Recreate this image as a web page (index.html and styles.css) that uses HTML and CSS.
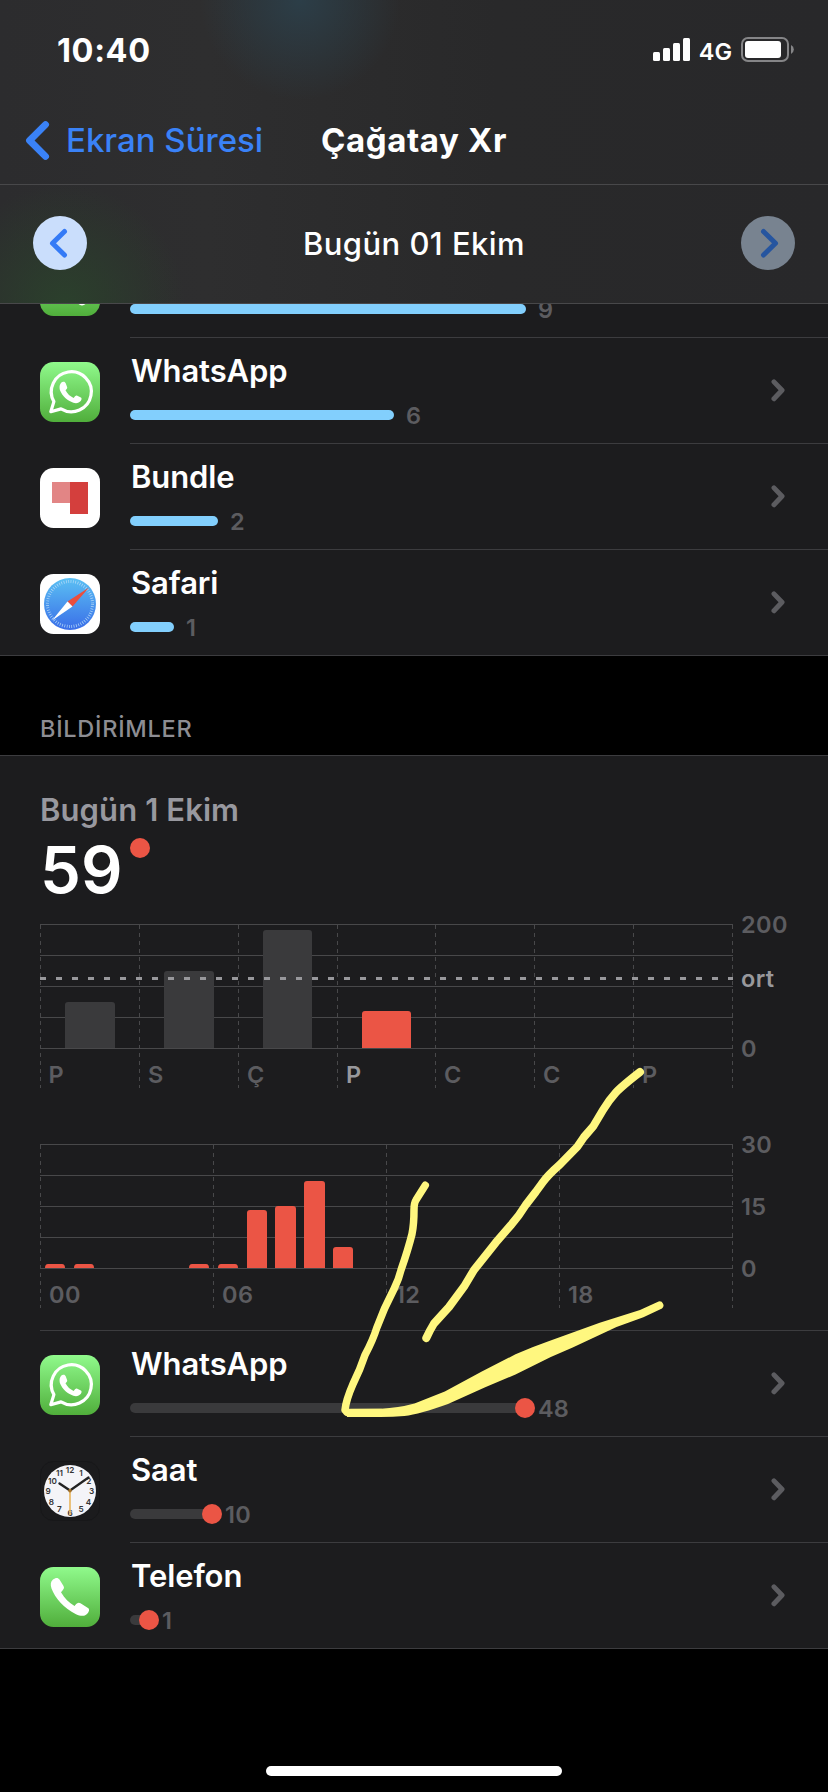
FILE: index.html
```
<!DOCTYPE html>
<html lang="tr">
<head>
    <meta charset="UTF-8">
    <meta name="viewport" content="width=device-width, initial-scale=1.0">
    <title>Ekran Süresi</title>
    <link rel="stylesheet" href="styles.css">
</head>
<body>
    <!-- icons used more than once -->
    <svg class="defs" width="0" height="0">
        <defs>
            <linearGradient id="green" x1="0" y1="0" x2="0" y2="1">
                <stop offset="0" stop-color="#90fa8c" />
                <stop offset="1" stop-color="#50ae3b" />
            </linearGradient>
            <linearGradient id="blue" x1="0" y1="0" x2="0" y2="1">
                <stop offset="0" stop-color="#5bc0f3" />
                <stop offset="1" stop-color="#3a6ee8" />
            </linearGradient>
        </defs>
        <symbol id="whatsapp" viewBox="0 0 60 60">
            <rect width="60" height="60" rx="13.5" fill="url(#green)" />
            <path d="M10.8 49.7 L13.9 39.6 A20 20 0 1 1 21 46.9 Z" fill="none" stroke="#fff" stroke-width="3.2" stroke-linejoin="round" />
            <path d="M22.3 20 c1.8-.6 2.8-.2 3.4 1.3 l1.4 3.6 c.4 1.1-.1 1.8-1.6 3.4 c2 3.8 4.6 6 8.2 7.6 c1.9-2.4 2.4-2.8 3.6-2.2 l3.6 1.8 c1 .6.8 2.2-.2 3.6 c-1.5 1.8-4.4 2.6-7.3 1.6 c-6-2-11.2-7-13.2-12 c-1.2-3.4-.6-7.4 2.1-8.7z" fill="#fff" />
        </symbol>
        <symbol id="chevron" viewBox="0 0 14 24">
            <path d="M2.8 3 L11.2 11.7 L2.8 20.6" fill="none" stroke="#5c5c60" stroke-width="5.2" stroke-linecap="round" stroke-linejoin="round" />
        </symbol>
    </svg>

    <div class="screen">
        <header>
            <!-- Status bar -->
            <div class="status">
                <span class="time">10:40</span>
                <svg class="signal" width="38" height="24" viewBox="0 0 38 24" fill="#fff">
                    <rect x="0" y="14" width="7" height="9" rx="1.5" />
                    <rect x="10" y="10" width="7" height="13" rx="1.5" />
                    <rect x="20" y="5" width="7" height="18" rx="1.5" />
                    <rect x="30" y="0" width="7" height="23" rx="1.5" />
                </svg>
                <span class="network">4G</span>
                <svg class="battery" width="54" height="26" viewBox="0 0 54 26">
                    <rect x="1" y="1" width="46" height="23" rx="6" fill="none" stroke="#858587" stroke-width="2" />
                    <rect x="4" y="4" width="36" height="17" rx="3" fill="#fff" />
                    <path d="M50 8 a5 5 0 0 1 0 9z" fill="#858587" />
                </svg>
            </div>

            <!-- Navigation -->
            <nav>
                <svg class="back" width="26" height="42" viewBox="0 0 26 42">
                    <path d="M20.5 4.6 L4.6 20.5 L20.5 36.4" fill="none" stroke="#3a82f7" stroke-width="7" stroke-linecap="round" stroke-linejoin="round" />
                </svg>
                <a class="parent">Ekran Süresi</a>
                <h1>Çağatay Xr</h1>
            </nav>

            <!-- Date picker -->
            <div class="date">
                <svg width="54" height="54" viewBox="0 0 54 54">
                    <circle cx="27" cy="27" r="27" fill="#cadefc" />
                    <path d="M31.5 15.5 L19.5 27.3 L31.5 39" fill="none" stroke="#347af6" stroke-width="5" stroke-linecap="round" stroke-linejoin="round" />
                </svg>
                <h2>Bugün 01 Ekim</h2>
                <svg width="54" height="54" viewBox="0 0 54 54">
                    <circle cx="27" cy="27" r="27" fill="#788390" />
                    <path d="M22.5 15.5 L34.5 27.3 L22.5 39" fill="none" stroke="#26559f" stroke-width="5" stroke-linecap="round" stroke-linejoin="round" />
                </svg>
            </div>
        </header>

        <!-- Pickups -->
        <section class="list pickups">
            <div class="row">
                <svg class="app" viewBox="0 0 60 60">
                    <rect width="60" height="60" rx="13.5" fill="url(#green)" />
                    <ellipse cx="42" cy="44" rx="5" ry="5.5" fill="#fff" />
                </svg>
                <div class="info">
                    <div class="name"></div>
                    <div class="usage"><i style="width: 396px"></i><span>9</span></div>
                </div>
                <div class="more"></div>
            </div>
            <div class="row">
                <svg class="app"><use href="#whatsapp" /></svg>
                <div class="info">
                    <div class="name">WhatsApp</div>
                    <div class="usage"><i style="width: 264px"></i><span>6</span></div>
                </div>
                <svg class="more"><use href="#chevron" /></svg>
            </div>
            <div class="row">
                <svg class="app" viewBox="0 0 60 60">
                    <rect width="60" height="60" rx="13.5" fill="#fff" />
                    <rect x="12" y="14" width="18" height="21" fill="#e28585" />
                    <rect x="30" y="14" width="18" height="32" fill="#d43f3d" />
                </svg>
                <div class="info">
                    <div class="name">Bundle</div>
                    <div class="usage"><i style="width: 88px"></i><span>2</span></div>
                </div>
                <svg class="more"><use href="#chevron" /></svg>
            </div>
            <div class="row">
                <svg class="app" viewBox="0 0 60 60">
                    <rect width="60" height="60" rx="13.5" fill="#fff" />
                    <circle cx="30" cy="30" r="26" fill="url(#blue)" />
                    <circle cx="30" cy="30" r="22.5" fill="none" stroke="#b5daf8" stroke-width="3" stroke-dasharray=".7 1.656" />
                    <path d="M49 13.5 L32.5 32.5 L27.5 27.5z" fill="#eb4e3d" />
                    <path d="M12 46.5 L27.5 27.5 L32.5 32.5z" fill="#fff" />
                </svg>
                <div class="info">
                    <div class="name">Safari</div>
                    <div class="usage"><i style="width: 44px"></i><span>1</span></div>
                </div>
                <svg class="more"><use href="#chevron" /></svg>
            </div>
        </section>

        <h3>BİLDİRİMLER</h3>

        <!-- Notifications -->
        <section class="list notifications">
            <div class="summary">
                <div class="day">Bugün 1 Ekim</div>
                <div class="total"><span>59</span><i></i></div>
            </div>

            <!-- Week chart -->
            <svg class="chart week" width="788" height="200" viewBox="0 0 788 200">
                <path class="grid" d="M0 20.5H693 M0 51.5H693 M0 82.5H693 M0 113.5H693 M0 144.5H693" />
                <path class="grid dashed" d="M.5 21V184 M99.5 21V184 M198.5 21V184 M297.5 21V184 M395.5 21V184 M494.5 21V184 M593.5 21V184 M692.5 21V184" />
                <path class="old" d="M25 144V101q0-3 3-3h44q3 0 3 3V144z M124 144V70q0-3 3-3h44q3 0 3 3V144z M223 144V29q0-3 3-3h43q3 0 3 3V144z" />
                <path class="today" d="M322 144V110q0-3 3-3h43q3 0 3 3V144z" />
                <path class="average" d="M0 74.5H693" />
                <text x="8.5" y="179">P</text>
                <text x="108" y="179">S</text>
                <text x="207" y="179">Ç</text>
                <text x="306" y="179" class="on">P</text>
                <text x="404" y="179">C</text>
                <text x="503" y="179">C</text>
                <text x="602" y="179">P</text>
                <text x="701" y="29">200</text>
                <text x="701" y="83" class="on">ort</text>
                <text x="701" y="153">0</text>
            </svg>

            <!-- Hour chart -->
            <svg class="chart hours" width="788" height="200" viewBox="0 0 788 200">
                <path class="grid" d="M0 20.5H693 M0 51.5H693 M0 82.5H693 M0 113.5H693 M0 144.5H693" />
                <path class="grid dashed" d="M.5 21V184 M173.5 21V184 M346.5 21V184 M519.5 21V184 M692.5 21V184" />
                <path class="today" d="M5 144q0-4 3-4h14q3 0 3 4z M34 144q0-4 3-4h14q3 0 3 4z M149 144q0-4 3-4h14q3 0 3 4z M178 144q0-4 3-4h14q3 0 3 4z
                    M207 144V89q0-3 3-3h14q3 0 3 3V144z M235 144V85q0-3 3-3h15q3 0 3 3V144z M264 144V60q0-3 3-3h15q3 0 3 3V144z M293 144V126q0-3 3-3h14q3 0 3 3V144z" />
                <text x="9" y="179">00</text>
                <text x="182" y="179">06</text>
                <text x="355" y="179">12</text>
                <text x="528" y="179">18</text>
                <text x="701" y="29">30</text>
                <text x="701" y="91">15</text>
                <text x="701" y="153">0</text>
            </svg>

            <div class="row first">
                <svg class="app"><use href="#whatsapp" /></svg>
                <div class="info">
                    <div class="name">WhatsApp</div>
                    <div class="count"><i style="width: 395px"></i><span>48</span></div>
                </div>
                <svg class="more"><use href="#chevron" /></svg>
            </div>
            <div class="row">
                <svg class="app clock" viewBox="0 0 60 60">
                    <rect x=".5" y=".5" width="59" height="59" rx="13" fill="#1b1b1d" stroke="#171719" />
                    <circle cx="30" cy="30" r="26" fill="#f4f4f8" />
                    <text x="30" y="12">12</text>
                    <text x="41" y="15">1</text>
                    <text x="48.7" y="23">2</text>
                    <text x="51.7" y="32.5">3</text>
                    <text x="48.5" y="44">4</text>
                    <text x="41" y="51.3">5</text>
                    <text x="30" y="54.5">6</text>
                    <text x="19.3" y="51.3">7</text>
                    <text x="11.3" y="44">8</text>
                    <text x="8" y="32.5">9</text>
                    <text x="12.5" y="23">10</text>
                    <text x="19.5" y="15">11</text>
                    <path d="M30 29.5 L19.5 22.5" stroke="#222" stroke-width="2.4" stroke-linecap="round" />
                    <path d="M30 29.5 L48.5 16.5" stroke="#222" stroke-width="2.2" stroke-linecap="round" />
                    <path d="M30 28V54" stroke="#e8b45c" stroke-width="1.6" />
                    <circle cx="30" cy="29.7" r="1.8" fill="#a87429" />
                </svg>
                <div class="info">
                    <div class="name">Saat</div>
                    <div class="count"><i style="width: 82px"></i><span>10</span></div>
                </div>
                <svg class="more"><use href="#chevron" /></svg>
            </div>
            <div class="row">
                <svg class="app" viewBox="0 0 60 60">
                    <rect width="60" height="60" rx="13.5" fill="url(#green)" />
                    <path d="M13 12.5 c2.5-2 5-2.3 6.5 0 l4 6.5 c1.2 2 .2 3.5-2.5 6.2 c3.5 6 8 10.5 13.5 13.8 c2.5-3 4-4 6-2.7 l7.5 4.7 c2 1.5 1 4-1 6 c-2.5 2.5-6.5 2.3-11 .2 c-12-5.7-21-16.2-24.5-25.7 c-1.2-3.7-1-7 1.5-9z" fill="#fff" />
                </svg>
                <div class="info">
                    <div class="name">Telefon</div>
                    <div class="count"><i style="width: 19px"></i><span>1</span></div>
                </div>
                <svg class="more"><use href="#chevron" /></svg>
            </div>
        </section>

        <div class="home"></div>

        <!-- Hand drawn arrow -->
        <svg class="marker" width="828" height="1792" viewBox="0 0 828 1792">
            <path class="pen" d="M640 1072 C631 1079 621 1087 615.7 1092.7 Q609 1100 603 1110 L593 1126.7 L584 1137 L577.3 1146.7 L559.7 1164.7 Q548 1175 543 1182 L535.7 1192 L525.7 1205 Q519 1216 511 1225 L495.7 1242.7 L474 1270 L464 1286.7 L449 1307 L434 1323.5 Q430 1330 426.3 1338" />
            <path class="pen thin" d="M425.3 1185.3 L416 1200 Q414 1203 414 1210 Q414 1224 412 1234 Q408 1250 401 1270 Q399 1279 394 1289 Q384 1308 376.7 1328 Q373 1340 365 1355 Q360 1370 353 1384 Q346 1400 345 1410 L347 1412.5 H381" />
            <path class="fill" d="M347 1409 L381 1408.7 Q398 1408 414.5 1403.5 L444.8 1391.5 L481.8 1371.5 L515.5 1354.3 Q532 1347 549.2 1341 L599.7 1322.7 L640 1310 L658.6 1301.5 A4 4 0 0 1 662 1308.5 L643.4 1317.3 L616.5 1327 L572.7 1347.5 L550.8 1357 L515.5 1374.5 L485.2 1387.2 L448 1404 Q420 1414 404.4 1416 Q393 1417 380.8 1417 H347z" />
        </svg>
    </div>
</body>
</html>
```
FILE: styles.css
```
*{
    margin: 0;
    padding: 0;
    box-sizing: border-box;
}

body{
    background: #000;
    color: #fff;
    font-family: Inter, "Noto Sans", sans-serif;
}

svg{
    display: block;
    flex: none;
}

.defs{
    position: absolute;
}

.screen{
    position: relative;
    width: 828px;
    height: 1792px;
    overflow: hidden;
    display: flex;
    flex-direction: column;
}

header{
    flex: none;
    height: 304px;
    border-bottom: 1px solid #48484a;
    background:
        radial-gradient(circle at 300px 0, #2c3e48 0, #2c3e4800 100px),
        radial-gradient(circle at 65px 304px, #2b402c 0, #2b402c00 120px),
        linear-gradient(90deg, #2c2c2e, #2e2e2f 25%, #29292a 60%, #28282a);
}

.status{
    display: flex;
    align-items: center;
    height: 100px;
    padding: 0 33px 0 57px;
}

.time{
    flex: 1;
    font-size: 32.5px;
    font-weight: 700;
    letter-spacing: .6px;
}

.network{
    margin: 2px 9px 0 8px;
    font-size: 23.5px;
    font-weight: 600;
}

nav{
    display: grid;
    grid-template-columns: 40px 1fr auto 1fr 40px;
    align-items: center;
    height: 85px;
    padding: 0 26px 4px;
    border-bottom: 1px solid #48484a;
}

.back{
    margin: 1px 0 0 -1px;
}

.parent{
    color: #3a82f7;
    font-size: 33px;
    font-weight: 500;
    white-space: nowrap;
}

h1{
    font-size: 33px;
    font-weight: 700;
    letter-spacing: .6px;
}

.date{
    display: flex;
    align-items: center;
    justify-content: space-between;
    height: 116px;
    padding: 0 33px;
}

h2{
    font-size: 31px;
    font-weight: 500;
    letter-spacing: .45px;
}

/* app lists */
.list{
    flex: none;
    background: #1c1c1e;
    border-bottom: 1px solid #3c3c3f;
}

.pickups{
    display: flex;
    flex-direction: column;
    justify-content: flex-end;
    height: 352px;
    overflow: hidden;
}

.row{
    display: flex;
    flex: none;
    height: 106px;
    padding-left: 40px;
}

.row:last-child{
    height: 105px;
}

.app{
    width: 60px;
    height: 60px;
    margin: 24px 30px 0 0;
}

.info{
    flex: 1;
    border-bottom: 1px solid #3c3c3f;
}

.row:last-child .info{
    border: 0;
}

.name{
    height: 62px;
    padding: 14px 0 0 1px;
    font-size: 31px;
    font-weight: 600;
    letter-spacing: -.1px;
    line-height: 38px;
}

.usage, .count{
    display: flex;
    align-items: center;
    height: 30px;
    color: #5c5c60;
    font-size: 23.5px;
    font-weight: 600;
    letter-spacing: .2px;
}

.usage i{
    height: 10px;
    margin-right: 12px;
    border-radius: 5px;
    background: #82cffd;
}

.count i{
    display: flex;
    align-items: center;
    justify-content: flex-end;
    height: 10px;
    margin-right: 13px;
    border-radius: 5px;
    background: #3a3a3c;
}

.count i::after{
    content: "";
    flex: none;
    width: 20px;
    height: 20px;
    margin-right: -10px;
    border-radius: 50%;
    background: #eb5545;
}

.more{
    width: 57px;
    height: 105px;
    padding: 41px 43px 41px 0;
    box-shadow: 0 1px #3c3c3f;
}

.more use{
    width: 14px;
    height: 24px;
}

.row:last-child .more{
    box-shadow: none;
}

h3{
    height: 99px;
    padding: 58px 40px 0;
    color: #8d8d93;
    font-size: 23.5px;
    font-weight: 500;
    letter-spacing: .75px;
    line-height: 30px;
}

/* notifications */
.notifications{
    border-top: 1px solid #3c3c3f;
}

.summary{
    height: 148px;
    padding: 34px 40px 0;
}

.day{
    color: #98989f;
    font-size: 31px;
    font-weight: 600;
    letter-spacing: .1px;
    line-height: 40px;
}

.total{
    display: flex;
    font-size: 65px;
    font-weight: 600;
    line-height: 80px;
}

.total span{
    width: 84px;
}

.total i{
    width: 20px;
    height: 20px;
    margin: 8px 0 0 6px;
    border-radius: 50%;
    background: #eb5545;
}

.chart{
    height: 200px;
    margin-left: 40px;
}

.week{
    margin-bottom: 20px;
}

.hours{
    margin-bottom: 6px;
}

.first{
    height: 107px;
    margin-left: 40px;
    padding-left: 0;
    border-top: 1px solid #3c3c3f;
}

.chart text{
    fill: #5c5c60;
    font-size: 23.5px;
    font-weight: 600;
    letter-spacing: .4px;
}

.chart .on{
    fill: #98989c;
}

.grid{
    stroke: #48484a;
    fill: none;
}

.dashed{
    stroke-dasharray: 4 4;
}

.average{
    stroke: #98989c;
    stroke-width: 3;
    stroke-dasharray: 6 10;
}

.old{
    fill: #3a3a3c;
}

.today{
    fill: #eb5545;
}

.clock text{
    font-size: 8.2px;
    font-weight: 600;
    text-anchor: middle;
    fill: #333;
}

.home{
    width: 296px;
    height: 10px;
    margin: auto auto 16px;
    border-radius: 5px;
    background: #fff;
}

/* drawn over the page */
.marker{
    position: absolute;
    top: 0;
    left: 0;
    pointer-events: none;
}

.pen{
    fill: none;
    stroke: #fff77f;
    stroke-width: 8;
    stroke-linecap: round;
    stroke-linejoin: round;
}

.thin{
    stroke-width: 7.5;
}

.fill{
    fill: #fff77f;
}
```
